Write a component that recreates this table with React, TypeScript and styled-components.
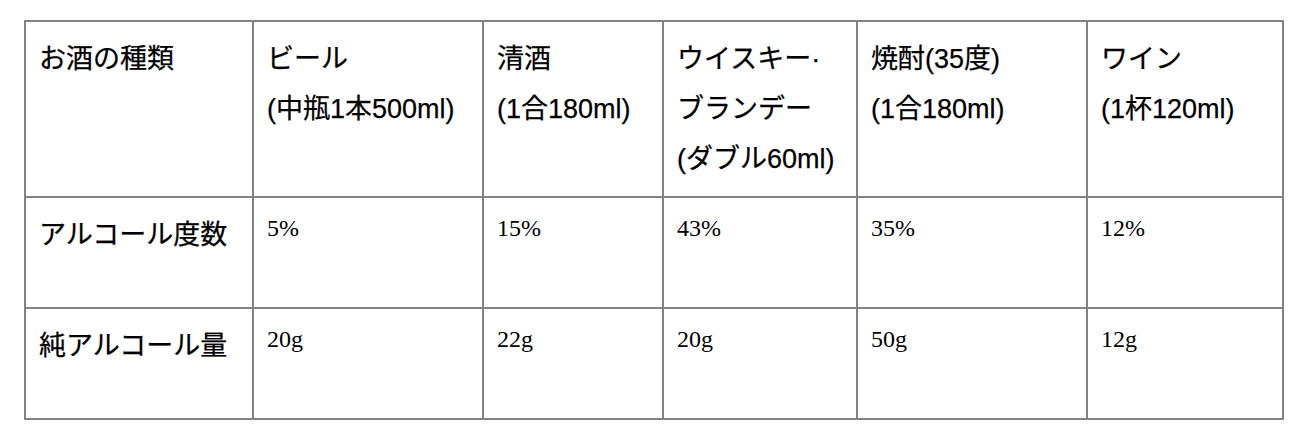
import React, {Component} from "react";
import styled, {createGlobalStyle, css} from "styled-components";

interface IRow {
    label: string,
    values: string[]
}

const GlobalStyle = createGlobalStyle`
    body {
        margin: 0;
        background: #ffffff;
    }
`,

    Page = styled.div`
        padding: 20px 0 0 24px;
`,

    Table = styled.table`
        border-collapse: collapse;
        table-layout: fixed;
        width: 1260px;
        color: #000000;
`,

    Col = styled.col<{$width: number}>`
        width: ${(p) => p.$width}px;
`,

    CellStyle = css`
        border: 2px solid #838383;
        padding: 12px 13px;
        vertical-align: top;
        text-align: left;
`,

    SansStyle = css`
        font-family: "Liberation Sans", "Noto Sans CJK JP", sans-serif;
        font-size: 27px;
        font-weight: normal;
        line-height: 50px;
        -webkit-text-stroke: 0.25px #000000;
`,

    Th = styled.th`
        ${CellStyle}
        ${SansStyle}
        height: 150px;
`,

    Line = styled.span`
        display: block;
        white-space: nowrap;
`,

    LabelTd = styled.td`
        ${CellStyle}
        ${SansStyle}
        white-space: nowrap;
        height: 85px;
`,

    ValueTd = styled.td`
        ${CellStyle}
        font-family: "Liberation Serif", serif;
        font-size: 24px;
        line-height: 36px;
        height: 85px;
`;

const widths = [228, 230, 180, 194, 230, 196],

    header = [
        ["お酒の種類"],
        ["ビール", "(中瓶1本500ml)"],
        ["清酒", "(1合180ml)"],
        ["ウイスキー·", "ブランデー", "(ダブル60ml)"],
        ["焼酎(35度)", "(1合180ml)"],
        ["ワイン", "(1杯120ml)"]
    ],

    rows: IRow[] = [
        {label: "アルコール度数", values: ["5%", "15%", "43%", "35%", "12%"]},
        {label: "純アルコール量", values: ["20g", "22g", "20g", "50g", "12g"]}
    ];

export class App extends Component<{}, {}> {

    renderRow (row: IRow) {

        return (
            <tr key={row.label}>
                <LabelTd>
                    {row.label}
                </LabelTd>
                {row.values.map((value, i) => (
                    <ValueTd key={i}>
                        {value}
                    </ValueTd>
                ))}
            </tr>
        );

    }

    render () {

        return (
            <Page>
                <GlobalStyle />
                <Table>
                    <colgroup>
                        {widths.map((w, i) => <Col key={i} $width={w} />)}
                    </colgroup>
                    <thead>
                        <tr>
                            {header.map((lines, i) => (
                                <Th key={i}>
                                    {lines.map((line) => (
                                        <Line key={line}>
                                            {line}
                                        </Line>
                                    ))}
                                </Th>
                            ))}
                        </tr>
                    </thead>
                    <tbody>
                        {rows.map((row) => this.renderRow(row))}
                    </tbody>
                </Table>
            </Page>
        );

    }

}

export default App;
